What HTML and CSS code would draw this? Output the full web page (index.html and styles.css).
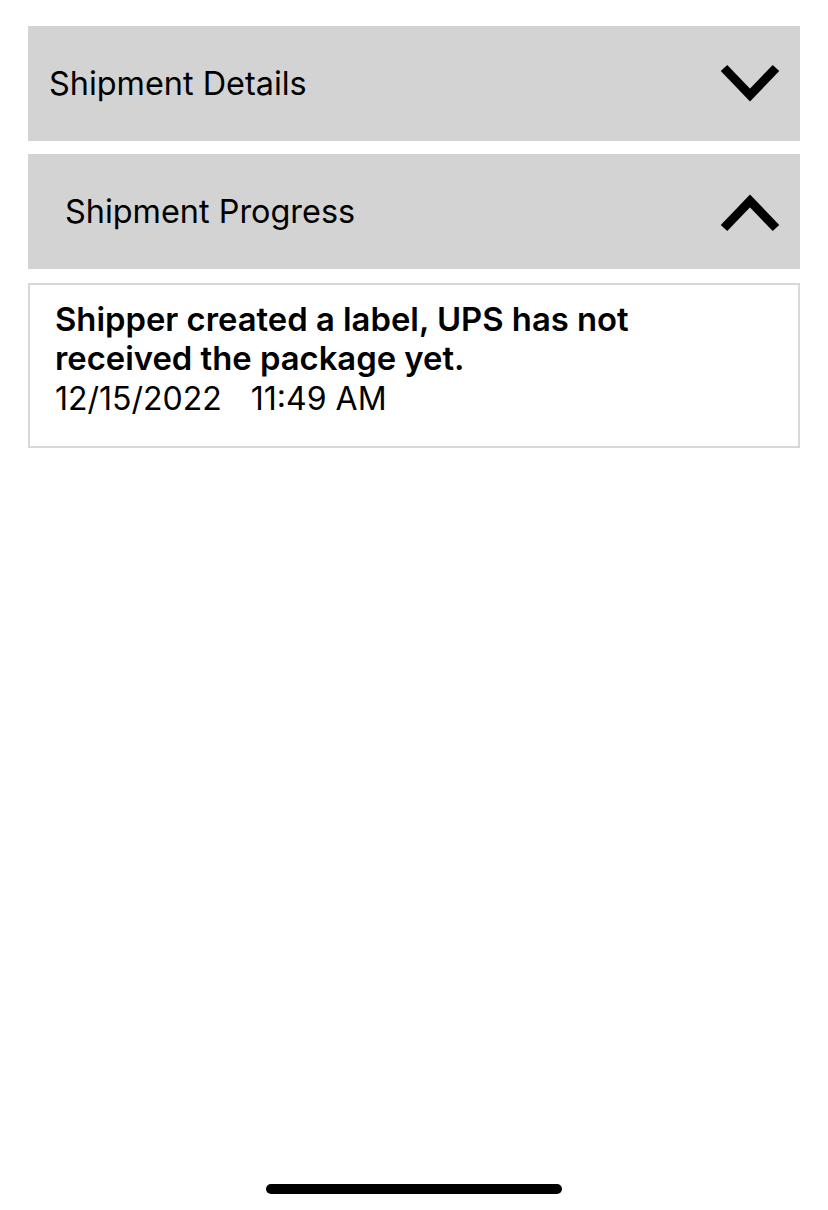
FILE: index.html
```html
<!DOCTYPE html>
<html>
<head>
<meta charset="utf-8">
<link rel="stylesheet" href="styles.css">
</head>
<body>
<div class="screen">
  <div class="panel panel-details">
    <span class="panel-title">Shipment Details</span>
    <svg class="chev" width="60" height="40" viewBox="0 0 60 40"><polyline points="4,4 30,31 56,4" fill="none" stroke="#000" stroke-width="9"/></svg>
  </div>
  <div class="panel panel-progress">
    <span class="panel-title">Shipment Progress</span>
    <svg class="chev" width="60" height="40" viewBox="0 0 60 40"><polyline points="4,36 30,9 56,36" fill="none" stroke="#000" stroke-width="9"/></svg>
  </div>
  <div class="card">
    <div class="status">Shipper created a label, UPS has not<br>received the package yet.</div>
    <div class="when"><span>12/15/2022</span><span>11:49 AM</span></div>
  </div>
  <div class="spacer"></div>
  <div class="home-bar"></div>
</div>
</body>
</html>
```
FILE: styles.css
```css
* { box-sizing: border-box; }
html, body { margin: 0; padding: 0; background: #fff; }
body { font-family: Inter, "Noto Sans", sans-serif; color: #000; }
.screen {
  width: 828px;
  height: 1210px;
  padding: 26px 28px 16px;
  display: flex;
  flex-direction: column;
}
.panel {
  height: 115px;
  background: #d3d3d3;
  display: flex;
  align-items: center;
  justify-content: space-between;
  padding-right: 20px;
}
.panel-details { padding-left: 21px; }
.panel-progress { padding-left: 37px; margin-top: 13px; }
.panel-title { font-size: 32.4px; }
.panel-details .panel-title { margin-top: 0; }
.chev { display: block; }
.card {
  margin-top: 14px;
  height: 165px;
  border: 2px solid #d8d8d8;
  padding: 15px 25px 0;
}
.status { font-size: 32.8px; font-weight: 600; line-height: 39px; }
.when { font-size: 32px; line-height: 41px; display: flex; gap: 29px; }
.spacer { flex: 1; }
.home-bar {
  align-self: center;
  width: 296px;
  height: 10px;
  border-radius: 5px;
  background: #000;
}
```
